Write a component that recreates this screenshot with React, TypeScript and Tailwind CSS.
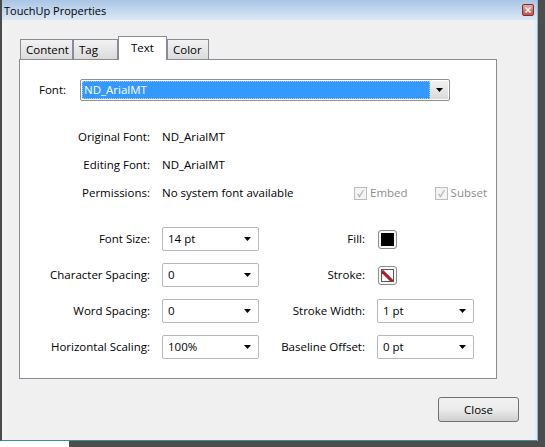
import React from "react";

const font = { fontFamily: '"Open Sans", "Noto Sans", sans-serif' };

function Arrow() {
  return (
    <svg width="7" height="4" viewBox="0 0 7 4" className="block">
      <path d="M0 0 H7 L3.5 4 Z" fill="#000" />
    </svg>
  );
}

function Select({ value, w = "w-[97px]" }: { value: string; w?: string }) {
  return (
    <div className={`${w} h-[24px] flex items-center justify-between border border-[#b5b8bf] rounded-[2px] bg-white pl-[5px] pr-[7px] text-[11.5px] text-black`}>
      <span>{value}</span>
      <Arrow />
    </div>
  );
}

function Label({ children, w }: { children: React.ReactNode; w: string }) {
  return <div className={`${w} text-right text-[11.5px] text-black shrink-0`}>{children}</div>;
}

function Check({ label }: { label: string }) {
  return (
    <div className="flex items-center gap-[3px]">
      <div className="w-[13px] h-[13px] border border-[#bcbcbc] bg-[#f4f4f4] flex items-center justify-center">
        <svg width="9" height="9" viewBox="0 0 9 9">
          <path d="M1.5 5 L3.5 7.5 L7.5 1" stroke="#b8b8b8" strokeWidth="1.3" fill="none" />
        </svg>
      </div>
      <span className="text-[11.5px] text-[#8d8d8d]">{label}</span>
    </div>
  );
}

function Swatch({ stroke }: { stroke?: boolean }) {
  return (
    <div className="w-[19px] h-[19px] border border-[#8a8a8a] rounded-[3px] bg-[#f8f8f8] p-[2px]">
      {stroke ? (
        <div className="w-full h-full border border-[#555] bg-white overflow-hidden">
          <svg width="13" height="13" viewBox="0 0 13 13" className="block">
            <path d="M0 1 L12 13" stroke="#b01c25" strokeWidth="3.2" />
          </svg>
        </div>
      ) : (
        <div className="w-full h-full bg-black" />
      )}
    </div>
  );
}

function Tab({ label, active, w }: { label: string; active?: boolean; w: string }) {
  if (active) {
    return (
      <div className={`${w} h-[24px] -mb-[1px] border border-b-0 border-[#898c95] bg-white flex justify-center pt-[2px] text-[11.5px] relative z-10`}>
        {label}
      </div>
    );
  }
  return (
    <div className={`${w} h-[20px] border border-b-0 border-[#898c95] bg-gradient-to-b from-[#f2f2f2] to-[#dcdcdc] flex items-center pl-[5px] text-[11.5px]`}>
      {label}
    </div>
  );
}

export default function App() {
  return (
    <div className="w-[545px] h-[447px] flex flex-col bg-[#4d4d4d]" style={font}>
      <div className="flex h-[441px]">
        <div className="w-[537px] h-[441px] flex flex-col border-l-2 border-[#4a4a4a] border-b border-b-[#3f8f94] bg-[#f0f0f0]">
          {/* title bar */}
          <div className="h-[20px] flex items-center justify-between pl-[2px] pr-[3px] bg-gradient-to-b from-[#a9c5e6] to-[#dce8f5]">
            <span className="text-[11px] text-black leading-none">TouchUp Properties</span>
            <div className="w-[12px] h-[12px] rounded-[2px] border border-[#7a2f2f] bg-gradient-to-b from-[#e8a6a0] to-[#c0504d] flex items-center justify-center">
              <svg width="6" height="6" viewBox="0 0 6 6">
                <path d="M0.5 0.5 L5.5 5.5 M5.5 0.5 L0.5 5.5" stroke="#fff" strokeWidth="1.5" />
              </svg>
            </div>
          </div>
          <div className="flex-1 flex flex-col border-r-2 border-[#e3edf7]">
            {/* tabs */}
            <div className="flex items-end pl-[18px] pt-[16px] gap-0">
              <Tab label="Content" w="w-[53px]" />
              <Tab label="Tag" w="w-[45px]" />
              <Tab label="Text" active w="w-[49px]" />
              <Tab label="Color" w="w-[42px]" />
            </div>
            {/* panel */}
            <div className="ml-[17px] w-[478px] h-[320px] border border-[#898c95] bg-white flex flex-col">
              <div className="mt-[19px] h-[22px] flex items-center">
                <div className="w-[60px] pl-[19px] text-[11.5px]">Font:</div>
                <div className="w-[370px] h-[22px] border border-[#8e8f8f] rounded-[2px] flex p-[1px] bg-white">
                  <div className="flex-1 bg-[#3399ff] text-white text-[11.5px] flex items-center pl-[1px] border border-dotted border-[#9fc7ef]">ND_ArialMT</div>
                  <div className="w-[18px] flex items-center justify-center bg-gradient-to-b from-[#f2f2f2] to-[#dadada]">
                    <Arrow />
                  </div>
                </div>
              </div>

              <div className="mt-[22px] flex flex-col">
                <div className="h-[28px] flex items-center">
                  <Label w="w-[130px]">Original Font:</Label>
                  <div className="ml-[12px] text-[11.5px]">ND_ArialMT</div>
                </div>
                <div className="h-[28px] flex items-center">
                  <Label w="w-[130px]">Editing Font:</Label>
                  <div className="ml-[12px] text-[11.5px]">ND_ArialMT</div>
                </div>
                <div className="h-[28px] flex items-center">
                  <Label w="w-[130px]">Permissions:</Label>
                  <div className="ml-[12px] w-[192px] text-[11.5px]">No system font available</div>
                  <Check label="Embed" />
                  <div className="ml-[27px]">
                    <Check label="Subset" />
                  </div>
                </div>
              </div>

              <div className="mt-[14px] flex flex-col">
                <div className="h-[36px] flex items-center">
                  <Label w="w-[130px]">Font Size:</Label>
                  <div className="ml-[12px]"><Select value="14 pt" /></div>
                  <Label w="w-[106px]">Fill:</Label>
                  <div className="ml-[13px]"><Swatch /></div>
                </div>
                <div className="h-[36px] flex items-center">
                  <Label w="w-[130px]">Character Spacing:</Label>
                  <div className="ml-[12px]"><Select value="0" /></div>
                  <Label w="w-[106px]">Stroke:</Label>
                  <div className="ml-[13px]"><Swatch stroke /></div>
                </div>
                <div className="h-[36px] flex items-center">
                  <Label w="w-[130px]">Word Spacing:</Label>
                  <div className="ml-[12px]"><Select value="0" /></div>
                  <Label w="w-[106px]">Stroke Width:</Label>
                  <div className="ml-[12px]"><Select value="1 pt" /></div>
                </div>
                <div className="h-[36px] flex items-center">
                  <Label w="w-[130px]">Horizontal Scaling:</Label>
                  <div className="ml-[12px]"><Select value="100%" /></div>
                  <Label w="w-[106px]">Baseline Offset:</Label>
                  <div className="ml-[12px]"><Select value="0 pt" /></div>
                </div>
              </div>
            </div>
            {/* footer */}
            <div className="flex justify-end pr-[16px] pt-[18px]">
              <div className="w-[81px] h-[25px] border border-[#707070] rounded-[3px] bg-gradient-to-b from-[#f2f2f2] via-[#ebebeb] to-[#cfcfcf] flex items-center justify-center text-[11.5px]">
                Close
              </div>
            </div>
          </div>
        </div>
        <div className="flex-1 bg-[#4d4d4d] border-l border-[#8fb8dc]" />
      </div>
      <div className="flex h-[6px]">
        <div className="w-[69px] bg-white" />
        <div className="flex-1 bg-[#4d4d4d]" />
      </div>
    </div>
  );
}
